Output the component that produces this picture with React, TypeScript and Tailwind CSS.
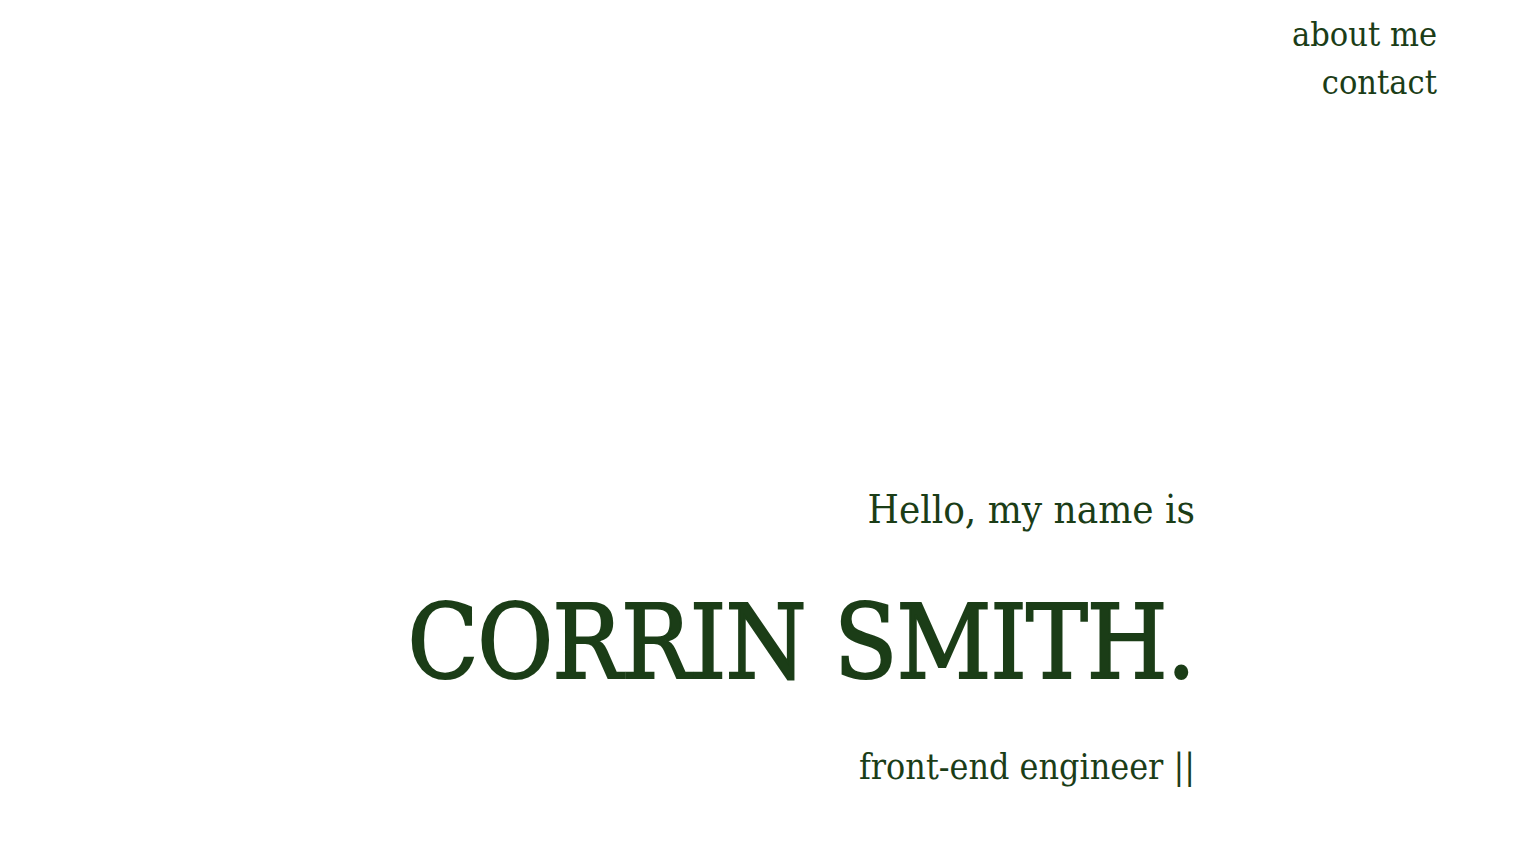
import React from "react";

export default function App() {
  const serif = { fontFamily: '"DejaVu Serif Condensed", "DejaVu Serif", serif' };
  return (
    <div className="w-[1526px] h-[848px] bg-white text-[#1b3d17] overflow-hidden" style={serif}>
      <nav className="flex flex-col items-end pr-[89px] pt-[10px] text-[34px] leading-[48px]">
        <a>about me</a>
        <a>contact</a>
      </nav>
      <section className="flex flex-col items-end pr-[331px] mt-[378px]">
        <p className="text-[40px] leading-[50px]">Hello, my name is</p>
        <h1 className="text-[103px] leading-[120px] mt-[48px] tracking-[-1px] [-webkit-text-stroke:2px_#1b3d17]">CORRIN SMITH.</h1>
        <p className="text-[35.5px] leading-[44px] mt-[43px]">front-end engineer ||</p>
      </section>
    </div>
  );
}
